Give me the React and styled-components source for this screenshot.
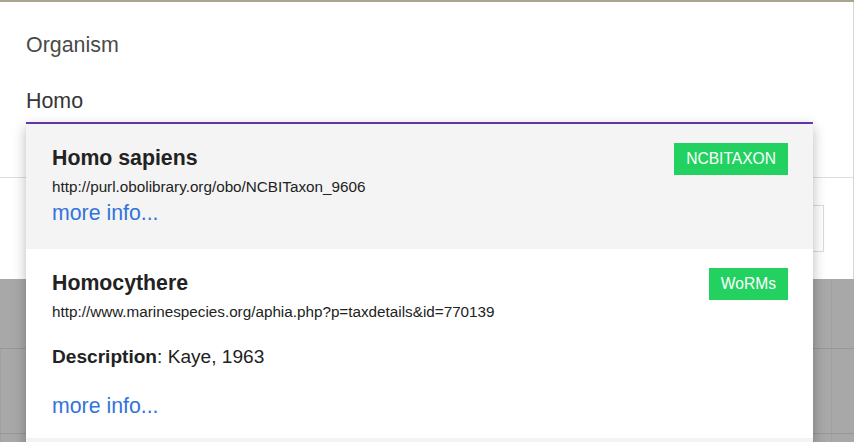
import { Fragment } from "react";
import styled, { createGlobalStyle } from "styled-components";

const GlobalStyle = createGlobalStyle`
  html, body {
    margin: 0;
    padding: 0;
    background: #a8a8a8;
    font-family: "Liberation Sans", Arial, sans-serif;
  }
`;

const Page = styled.div`
  width: 854px;
  height: 442px;
  overflow: hidden;
  border-top: 2px solid #a9a48f;
  box-sizing: border-box;
  background: #a8a8a8;
`;

const Modal = styled.div`
  width: 853px;
  background: #fff;
  border-right: 1px solid #d6d6d6;
`;

const FormSection = styled.section`
  padding: 28px 40px 53px 26px;
  border-bottom: 1px solid #dedede;
`;

const Label = styled.label`
  display: block;
  font-size: 21.4px;
  line-height: 30px;
  color: #4a4a4a;
  margin-bottom: 24px;
`;

const Field = styled.div`
  position: relative;
`;

const Input = styled.input`
  display: block;
  width: 100%;
  box-sizing: border-box;
  height: 40px;
  padding: 0 0 3px 0;
  margin: 0;
  border: none;
  border-bottom: 2px solid #673ab7;
  outline: none;
  background: transparent;
  font-family: inherit;
  font-size: 21.4px;
  color: #363636;
`;

const Dropdown = styled.ul`
  position: absolute;
  top: 100%;
  left: 0;
  right: 0;
  z-index: 10;
  margin: 0;
  padding: 0 0 8px;
  list-style: none;
  background: #f3f3f3;
  box-shadow: 0 3px 12px rgba(0, 0, 0, 0.28);
`;

const Item = styled.li`
  padding: 19px 25px ${(p) => (p.$hasDesc ? 18 : 22)}px 26px;
  background: ${(p) => (p.$active ? "#f4f4f4" : "#fff")};
  color: #222;
  cursor: pointer;
`;

const ItemHead = styled.div`
  display: flex;
  justify-content: space-between;
  align-items: flex-start;
`;

const Title = styled.strong`
  font-size: 21.3px;
  line-height: 30px;
  font-weight: 700;
  color: #222;
`;

const Tag = styled.span`
  height: 32px;
  padding: 0 12px;
  background: #23d160;
  color: #fff;
  font-size: 15.6px;
  line-height: 32px;
  white-space: nowrap;
`;

const Iri = styled.div`
  margin-top: 2px;
  font-size: 15.25px;
  line-height: 20px;
  color: #222;
`;

const Description = styled.p`
  margin: 23px 0;
  font-size: 19.1px;
  line-height: 24px;
  color: #222;

  b {
    font-weight: 700;
  }
`;

const MoreInfo = styled.a`
  display: block;
  margin-top: ${(p) => (p.$hasDesc ? 0 : 2)}px;
  font-size: 21.3px;
  line-height: 28px;
  color: #3273dc;
  text-decoration: none;
`;

const Footer = styled.footer`
  display: flex;
  justify-content: flex-end;
  padding: 27px 29px 27px 26px;
`;

const Button = styled.button`
  height: 47px;
  width: 130px;
  border: 1px solid #dbdbdb;
  background: #fff;
  font-family: inherit;
  font-size: 16px;
  color: #363636;
`;

const Table = styled.div`
  display: grid;
  grid-template-columns: 831px 1fr;
`;

const Cell = styled.div`
  height: ${(p) => p.$h}px;
  border-bottom: 1px solid #979797;
  & + & {
    border-left: 1px solid #a0a0a0;
  }
`;

const results = [
  {
    label: "Homo sapiens",
    iri: "http://purl.obolibrary.org/obo/NCBITaxon_9606",
    source: "NCBITAXON",
    active: true,
  },
  {
    label: "Homocythere",
    iri: "http://www.marinespecies.org/aphia.php?p=taxdetails&id=770139",
    source: "WoRMs",
    description: "Kaye, 1963",
  },
];

const rows = [69, 84, 84];

export default function App() {
  return (
    <>
      <GlobalStyle />
      <Page>
        <Modal>
          <FormSection>
            <Label htmlFor="organism">Organism</Label>
            <Field>
              <Input id="organism" value="Homo" readOnly />
              <Dropdown>
                {results.map((r) => (
                  <Item key={r.iri} $active={r.active} $hasDesc={!!r.description}>
                    <ItemHead>
                      <Title>{r.label}</Title>
                      <Tag>{r.source}</Tag>
                    </ItemHead>
                    <Iri>{r.iri}</Iri>
                    {r.description && (
                      <Description>
                        <b>Description</b>: {r.description}
                      </Description>
                    )}
                    <MoreInfo href="#" $hasDesc={!!r.description}>
                      more info...
                    </MoreInfo>
                  </Item>
                ))}
              </Dropdown>
            </Field>
          </FormSection>
          <Footer>
            <Button type="button">Save</Button>
          </Footer>
        </Modal>
        <Table>
          {rows.map((h, i) => (
            <Fragment key={i}>
              <Cell $h={h} />
              <Cell $h={h} />
            </Fragment>
          ))}
        </Table>
      </Page>
    </>
  );
}
